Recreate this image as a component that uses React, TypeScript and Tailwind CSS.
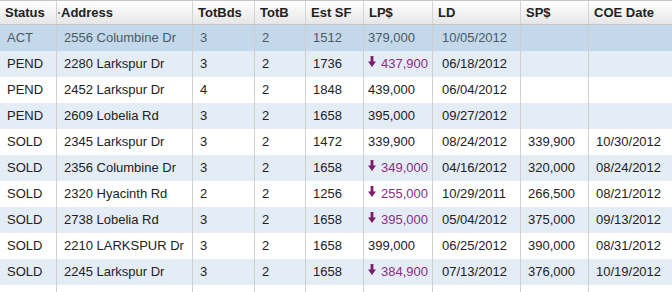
type Listing = {
  status: string;
  address: string;
  beds: string;
  baths: string;
  sqft: string;
  lp: string;
  reduced?: boolean;
  ld: string;
  sp?: string;
  coe?: string;
};

const LISTINGS: Listing[] = [
  { status: "ACT", address: "2556 Columbine Dr", beds: "3", baths: "2", sqft: "1512", lp: "379,000", ld: "10/05/2012" },
  { status: "PEND", address: "2280 Larkspur Dr", beds: "3", baths: "2", sqft: "1736", lp: "437,900", reduced: true, ld: "06/18/2012" },
  { status: "PEND", address: "2452 Larkspur Dr", beds: "4", baths: "2", sqft: "1848", lp: "439,000", ld: "06/04/2012" },
  { status: "PEND", address: "2609 Lobelia Rd", beds: "3", baths: "2", sqft: "1658", lp: "395,000", ld: "09/27/2012" },
  { status: "SOLD", address: "2345 Larkspur Dr", beds: "3", baths: "2", sqft: "1472", lp: "339,900", ld: "08/24/2012", sp: "339,900", coe: "10/30/2012" },
  { status: "SOLD", address: "2356 Columbine Dr", beds: "3", baths: "2", sqft: "1658", lp: "349,000", reduced: true, ld: "04/16/2012", sp: "320,000", coe: "08/24/2012" },
  { status: "SOLD", address: "2320 Hyacinth Rd", beds: "2", baths: "2", sqft: "1256", lp: "255,000", reduced: true, ld: "10/29/2011", sp: "266,500", coe: "08/21/2012" },
  { status: "SOLD", address: "2738 Lobelia Rd", beds: "3", baths: "2", sqft: "1658", lp: "395,000", reduced: true, ld: "05/04/2012", sp: "375,000", coe: "09/13/2012" },
  { status: "SOLD", address: "2210 LARKSPUR Dr", beds: "3", baths: "2", sqft: "1658", lp: "399,000", ld: "06/25/2012", sp: "390,000", coe: "08/31/2012" },
  { status: "SOLD", address: "2245 Larkspur Dr", beds: "3", baths: "2", sqft: "1658", lp: "384,900", reduced: true, ld: "07/13/2012", sp: "376,000", coe: "10/19/2012" },
];

const HEADERS = ["Status", "Address", "TotBds", "TotB", "Est SF", "LP$", "LD", "SP$", "COE Date"];

// column widths add up to the 672px window
const GRID = "grid grid-cols-[56px_136px_62px_51px_58px_69px_88px_68px_84px]";

export default function App() {
  return (
    <div className="w-[672px] h-[292px] overflow-hidden bg-white font-['Liberation_Sans',Arial,sans-serif] text-[13px] text-[#222]">
      {/* Header */}
      <div className={`${GRID} h-[25px] border-t border-b border-[#c4c4c4] bg-gradient-to-b from-white to-[#e6e6e6] font-bold text-[#222]`}>
        {HEADERS.map((h, i) => (
          <div
            key={h}
            className={`flex items-center pl-[5px] leading-none ${i > 0 ? "border-l border-[#d4d4d4]" : ""}`}
          >
            {h === "Address" && <span className="-ml-[4px] mr-[1px] h-[2px] w-[2px] bg-[#888]" />}
            {h}
          </div>
        ))}
      </div>

      {/* Rows */}
      {LISTINGS.map((row, i) => (
        <Row key={row.address} row={row} index={i} />
      ))}
      <div className={`${GRID} h-[10px]`}>
        {HEADERS.map((h, i) => (
          <div key={h} className={i > 0 ? "border-l border-[#cfcfcf]" : ""} />
        ))}
      </div>
    </div>
  );
}

function Row({ row, index }: { row: Listing; index: number }) {
  const selected = index === 0;
  const bg = selected ? "bg-[#c3d8ea]" : index % 2 === 1 ? "bg-[#e4ecf6]" : "bg-white";
  const text = selected ? "text-[#4d5a66]" : "text-[#222]";
  return (
    <div className={`${GRID} h-[26px] ${bg} ${text}`}>
      <Cell first>{row.status}</Cell>
      <Cell>{row.address}</Cell>
      <Cell>{row.beds}</Cell>
      <Cell>{row.baths}</Cell>
      <Cell>{row.sqft}</Cell>
      <div className="flex items-center border-l border-[#cfcfcf] pl-[4px] whitespace-nowrap">
        {row.reduced ? (
          <>
            <DownArrow />
            <span className="ml-[5px] text-[#8d2c80]">{row.lp}</span>
          </>
        ) : (
          row.lp
        )}
      </div>
      <Cell pad="pl-[9px]">{row.ld}</Cell>
      <Cell>{row.sp ?? ""}</Cell>
      <Cell>{row.coe ?? ""}</Cell>
    </div>
  );
}

function Cell({ children, first, pad }: { children: React.ReactNode; first?: boolean; pad?: string }) {
  return (
    <div
      className={`flex items-center whitespace-nowrap ${pad ?? "pl-[7px]"} ${first ? "" : "border-l border-[#cfcfcf]"}`}
    >
      {children}
    </div>
  );
}

function DownArrow() {
  return (
    <svg viewBox="0 0 8 11" width="8" height="11" className="-mt-[6px]" aria-hidden>
      <rect x="2.6" y="0" width="2.8" height="6" fill="#7c1d6c" />
      <path d="M0 5.5h8L4 11Z" fill="#7c1d6c" />
    </svg>
  );
}
